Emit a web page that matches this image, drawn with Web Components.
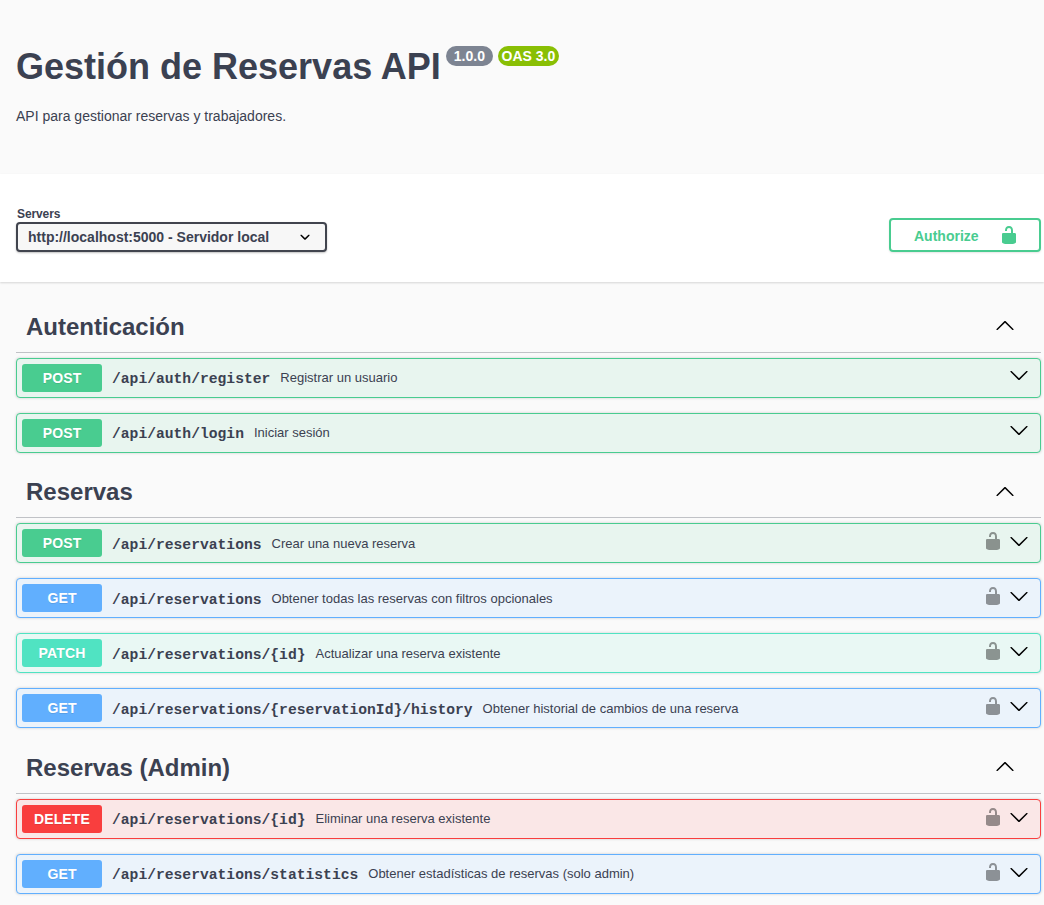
<!DOCTYPE html>
<html lang="es">
<head>
<meta charset="utf-8">
<title>Gestión de Reservas API</title>
<style>
html,body{margin:0;background:#fafafa}
body{height:905px;overflow:hidden;font-family:"Liberation Sans",Arial,sans-serif;color:#3b4151}
main{display:block;padding:21px 3px 0 16px}
</style>
</head>
<body>
<api-info version="1.0.0" oas="OAS 3.0">
  <span slot="title">Gestión de Reservas API</span>
  API para gestionar reservas y trabajadores.
</api-info>
<scheme-bar>
  <server-select slot="servers" label="Servers">http://localhost:5000 - Servidor local</server-select>
  <authorize-button slot="auth">Authorize</authorize-button>
</scheme-bar>
<main>
  <tag-section name="Autenticación">
    <op-block method="post" path="/api/auth/register">Registrar un usuario</op-block>
    <op-block method="post" path="/api/auth/login">Iniciar sesión</op-block>
  </tag-section>
  <tag-section name="Reservas" style="--text-shift:1px;--icon-shift:1px;--toggle-shift:1px">
    <op-block method="post" path="/api/reservations" locked>Crear una nueva reserva</op-block>
    <op-block method="get" path="/api/reservations" locked>Obtener todas las reservas con filtros opcionales</op-block>
    <op-block method="patch" path="/api/reservations/{id}" locked>Actualizar una reserva existente</op-block>
    <op-block method="get" path="/api/reservations/{reservationId}/history" locked>Obtener historial de cambios de una reserva</op-block>
  </tag-section>
  <tag-section name="Reservas (Admin)" style="--icon-shift:1px;padding-top:1px">
    <op-block method="delete" path="/api/reservations/{id}" locked>Eliminar una reserva existente</op-block>
    <op-block method="get" path="/api/reservations/statistics" locked>Obtener estadísticas de reservas (solo admin)</op-block>
  </tag-section>
</main>
<script>
const ICONS = {
  down: 'M17.418 6.109c.272-.268.709-.268.979 0s.271.701 0 .969l-7.908 7.83c-.27.268-.707.268-.979 0l-7.908-7.83c-.27-.268-.27-.701 0-.969.271-.268.709-.268.979 0L10 13.25l7.418-7.141z',
  up: 'M17.418 14.908c.272.268.709.268.979 0s.271-.701 0-.969l-7.908-7.83c-.27-.268-.707-.268-.979 0l-7.908 7.83c-.27.268-.27.701 0 .969.271.268.709.268.979 0L10 7.767l7.418 7.141z',
  lock: 'M15.8 8H14V5.6C14 2.703 12.665 1 10 1 7.334 1 6 2.703 6 5.6V6h2v-.801C8 3.754 8.797 3 10 3c1.203 0 2 .754 2 2.199V8H4c-.553 0-1 .646-1 1.199V17c0 .549.428 1.139.951 1.307l1.197.387C5.672 18.861 6.55 19 7.1 19h5.8c.549 0 1.428-.139 1.951-.307l1.196-.387c.524-.167.953-.757.953-1.306V9.199C17 8.646 16.352 8 15.8 8z',
  select: 'M13.418 7.859c.271-.268.709-.268.978 0 .27.268.272.701 0 .969l-3.908 3.83c-.27.268-.707.268-.979 0l-3.908-3.83c-.27-.267-.27-.701 0-.969.271-.268.709-.268.978 0L10 11l3.418-3.141z'
};
function define(name, render) {
  customElements.define(name, class extends HTMLElement {
    connectedCallback() {
      if (this.shadowRoot) return;
      this.attachShadow({mode: 'open'}).innerHTML = render(this);
    }
  });
}
define('ui-icon', el => `
<style>:host{display:block;flex:none;width:20px;height:20px}svg{display:block;width:100%;height:100%;fill:currentColor}</style>
<svg viewBox="0 0 20 20" aria-hidden="true"><path d="${ICONS[el.getAttribute('name')]}"/></svg>`);

define('api-info', el => `
<style>
:host{display:block;box-sizing:border-box;height:174px;padding:46px 16px 0}
header{display:flex;align-items:flex-start;gap:5px}
h1{margin:0;font-size:36px;line-height:41px;font-weight:700;white-space:nowrap}
.badge{box-sizing:border-box;height:20px;padding:2px 0;border-radius:57px;text-align:center;
  font-size:14px;line-height:16px;font-weight:700;color:#fff;background:#7d8492;width:47px}
.oas{background:#89bf04;width:61px}
p{margin:21px 0 0;font-size:14px;line-height:16px}
</style>
<header><h1><slot name="title"></slot></h1>
<span class="badge">${el.getAttribute('version')}</span><span class="badge oas">${el.getAttribute('oas')}</span></header>
<p><slot></slot></p>`);

define('scheme-bar', () => `
<style>
:host{display:flex;box-sizing:border-box;height:108px;padding:33px 3px 0 16px;justify-content:space-between;
  align-items:flex-start;background:#fff;box-shadow:0 1px 2px rgba(0,0,0,.15)}
slot[name=auth]{display:block;margin-top:11px}
</style>
<slot name="servers"></slot><slot name="auth"></slot>`);

define('server-select', el => `
<style>
:host{display:block}
label{display:block;margin:0 0 1px 1px;font-size:12px;line-height:14px;font-weight:700;letter-spacing:-.1px}
.box{display:flex;box-sizing:border-box;width:311px;height:30px;padding:3px 10px;justify-content:space-between;
  border:2px solid #41444e;border-radius:4px;background:#f7f7f7;box-shadow:0 1px 2px rgba(0,0,0,.25)}
.text{margin-top:2px;font-size:14px;line-height:16px;font-weight:700}
ui-icon{color:#000}
</style>
<label>${el.getAttribute('label')}</label>
<div class="box"><span class="text"><slot></slot></span><ui-icon name="select"></ui-icon></div>`);

define('authorize-button', () => `
<style>
:host{display:flex;box-sizing:border-box;width:152px;height:34px;padding:5px 20px 0 23px;justify-content:space-between;
  border:2px solid #49cc90;border-radius:4px;color:#49cc90;box-shadow:0 1px 2px rgba(0,0,0,.1)}
span{margin-top:3px;font-size:14px;line-height:16px;font-weight:700}
</style>
<span><slot></slot></span><ui-icon name="lock"></ui-icon>`);

define('tag-section', el => `
<style>
:host{display:block}
header{display:flex;box-sizing:border-box;height:50px;margin-bottom:5px;padding:10px 26px 0 10px;
  justify-content:space-between;align-items:flex-start;border-bottom:1px solid rgba(59,65,81,.3)}
h2{margin:0;font-size:24px;line-height:27px;font-weight:700}
ui-icon{margin-top:calc(2px + var(--toggle-shift,0px));color:#000}
</style>
<header><h2>${el.getAttribute('name')}</h2><ui-icon name="up"></ui-icon></header>
<slot></slot>`);

define('op-block', el => `
<style>
:host{display:flex;box-sizing:border-box;height:40px;margin-bottom:15px;padding:0 11px 0 5px;align-items:flex-start;
  border:1px solid var(--c);border-radius:4px;background:var(--bg);box-shadow:0 0 3px rgba(0,0,0,.19)}
:host([method=post]){--c:#49cc90;--bg:#e8f5ef}
:host([method=get]){--c:#61affe;--bg:#ebf3fb}
:host([method=patch]){--c:#50e3c2;--bg:#e9f8f4}
:host([method=delete]){--c:#f93e3e;--bg:#fae7e7}
.method{box-sizing:border-box;width:80px;height:28px;margin-top:5px;padding:6px 0;border-radius:3px;background:var(--c);
  color:#fff;text-align:center;text-transform:uppercase;font-size:14px;line-height:16px;font-weight:700;letter-spacing:.15px;text-shadow:0 1px 0 rgba(0,0,0,.1)}
.path{margin:calc(12px + var(--text-shift,0px)) 10px 0;font:700 14.664px/16px "Liberation Mono",monospace;white-space:nowrap}
.desc{flex:1;margin-top:calc(11px + var(--text-shift,0px));font-size:13px;line-height:15px;white-space:nowrap}
ui-icon{margin:calc(6px + var(--icon-shift,0px)) 0 0 6px;color:#000}
ui-icon[name=lock]{margin-right:0;opacity:.4}
</style>
<span class="method">${el.getAttribute('method')}</span>
<span class="path">${el.getAttribute('path')}</span>
<span class="desc"><slot></slot></span>
${el.hasAttribute('locked') ? '<ui-icon name="lock"></ui-icon>' : ''}
<ui-icon name="down"></ui-icon>`);
</script>
</body>
</html>
